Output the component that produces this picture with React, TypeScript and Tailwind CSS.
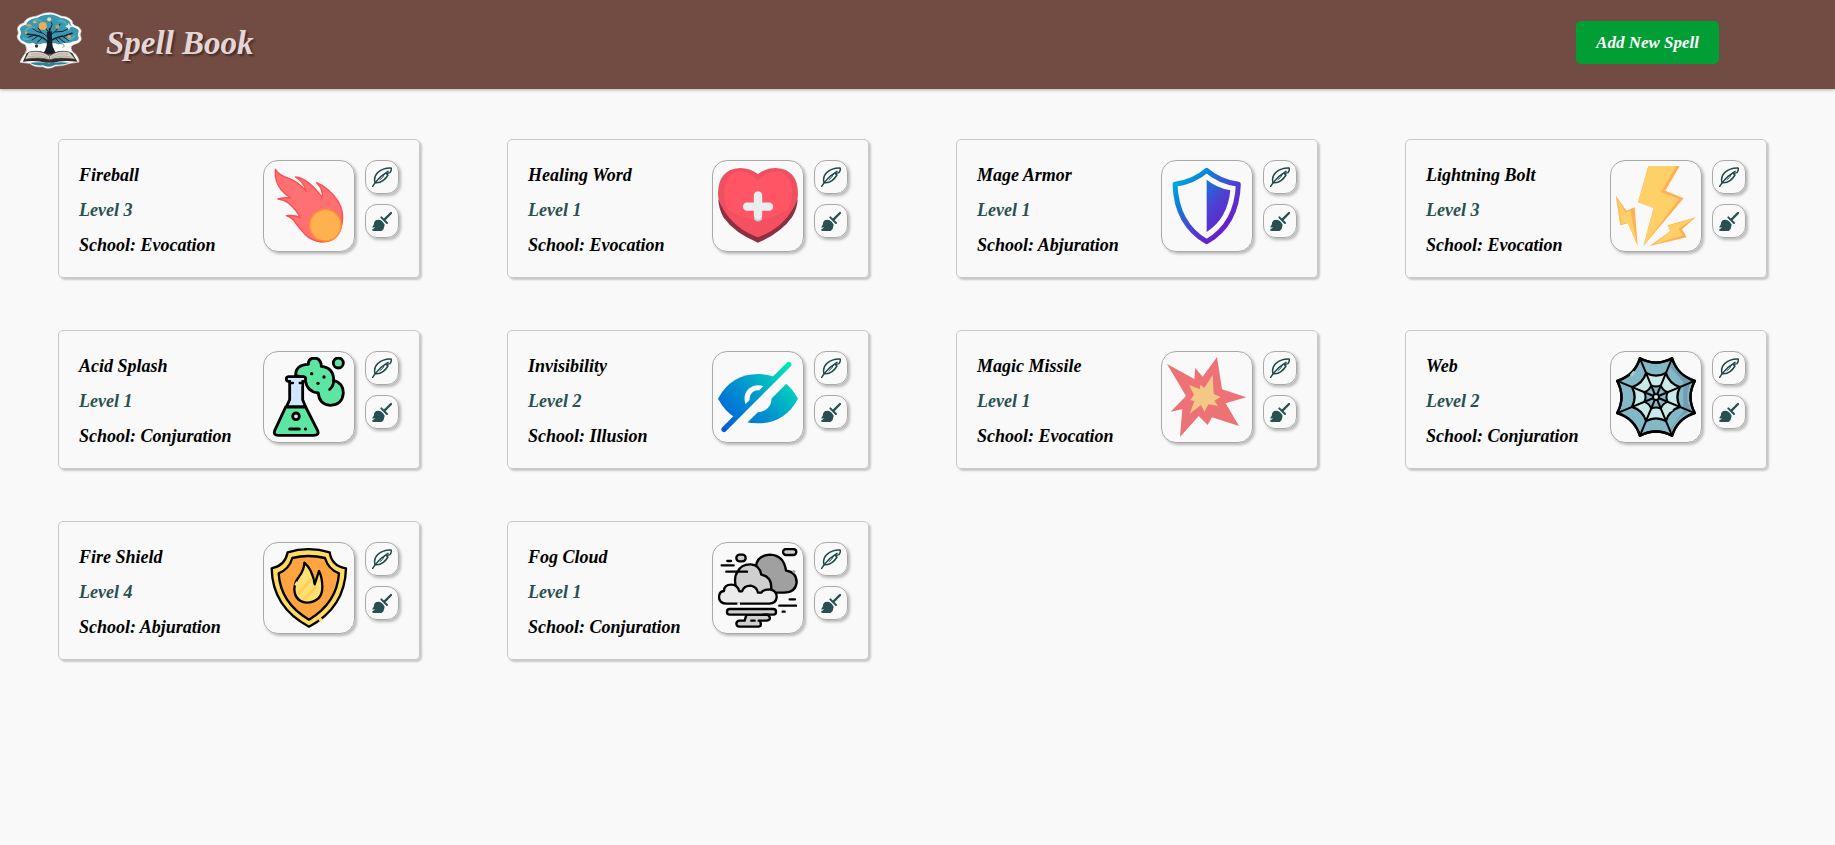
import type { ReactNode } from "react";

function Logo() {
  return (
    <svg viewBox="50 34 200 174" className="h-[58px] w-[67px]" role="img" aria-label="Spell Book logo">
      <path
        d="M148 36C160 35 176 42 186 47Q206 47 218 61Q216 69 226 75Q243 79 245 92Q239 102 245 112Q246 125 229 129Q218 132 215 138Q212 150 228 160Q240 178 238 184L212 188Q190 197 168 196Q148 208 130 198Q106 201 90 188L62 185Q64 176 76 160Q86 148 78 132Q56 124 53 108Q60 98 54 86Q54 72 73 67Q79 53 98 49Q112 47 122 42Q134 36 148 36Z"
        fill="#fff"
        stroke="#e4e2df"
        strokeWidth="2"
      />
      <path
        d="M148 42C160 40 176 47 184 52Q204 52 213 66Q212 74 222 80Q237 84 238 92Q232 102 238 112Q236 122 222 122Q208 130 194 126Q178 134 168 128H130Q112 134 100 126Q82 132 72 122Q60 116 61 108Q68 98 61 86Q62 76 80 72Q84 58 100 54Q116 52 124 46Q136 42 148 42Z"
        fill="#3a98b0"
      />
      <path d="M76 92q14-18 30-10M176 60q20-2 26 14M100 62q16-10 26 0M198 116q20 2 28-12M70 112q10 6 20 2" fill="none" stroke="#5fb3c4" strokeWidth="4" />
      <g fill="none" stroke="#15202c" strokeLinecap="round">
        <path d="M150 140V84M148 128Q132 106 106 104L82 100M150 122Q172 108 194 106L218 98" strokeWidth="4.5" />
        <path d="M148 112Q132 94 112 92L100 84M150 106L170 90L182 70M150 98L138 82M150 92L158 72L156 66M118 104L98 118M188 106L208 120M166 94L190 92L206 84M126 96L116 82M108 102L86 110M176 110L196 126M128 112L114 124M168 112L178 124" strokeWidth="3" />
      </g>
      <path d="M142 94L157 92Q157 126 160 138Q165 152 174 162H126Q138 152 141 138Q145 118 142 94Z" fill="#15202c" />
      <circle cx="130" cy="76" r="12" fill="#f4ab55" />
      <ellipse cx="88" cy="74" rx="9" ry="3.5" fill="#e0a85f" />
      <ellipse cx="106" cy="65" rx="6" ry="3" fill="#e8b46c" />
      <circle cx="174" cy="78" r="6" fill="#c39a63" />
      <circle cx="209" cy="108" r="6" fill="#c9a165" />
      <circle cx="149" cy="56" r="6" fill="#e3dcb4" />
      <path d="M208 66l3 8 9 3-9 4-3 8-4-8-8-4 8-3z" fill="#d4eef0" />
      <circle cx="80" cy="96" r="4" fill="#d9a35e" />
      <circle cx="111" cy="136" r="5" fill="#2b3440" />
      <path d="M186 130q10 0 8 8l-6 2" fill="none" stroke="#8d9299" strokeWidth="2.5" />
      <path d="M92 186Q120 182 148 188Q176 182 210 186Q190 194 168 192Q148 203 130 194Q106 196 92 186Z" fill="#2f8096" />
      <path d="M70 183L82 157Q124 142 150 166Q176 142 218 157L234 183Q190 178 160 186H140Q110 178 70 183Z" fill="#2c2a2c" />
      <path d="M76 176L88 154Q124 146 150 166Q176 146 210 154L228 176Q180 168 150 177Q120 168 76 176Z" fill="#d6cfc2" stroke="#4c4541" strokeWidth="2" />
      <path d="M94 161Q124 155 146 171M154 171Q178 155 206 161M88 169Q120 161 144 174M156 174Q184 161 214 169" fill="none" stroke="#a79f92" strokeWidth="2" />
      <path d="M150 164V180" stroke="#6e655d" strokeWidth="2" />
    </svg>
  );
}

function FireballArt() {
  return (
    <svg viewBox="658 109 240 240" className="size-20">
      <path
        d="M677 119Q690 139 718 146Q748 158 770 185Q762 156 737 142Q776 146 817 203Q822 180 801 159Q838 174 866 216Q884 248 877 282Q868 338 815 337Q786 334 764 312Q750 296 738 280Q728 264 710 258Q736 256 752 264Q740 240 716 220Q704 210 685 208Q704 202 724 205Q692 186 681 156Q675 138 677 119Z"
        fill="#ff7072"
        stroke="#ff4d50"
        strokeWidth="4"
        strokeLinejoin="round"
      />
      <circle cx="827" cy="287" r="47" fill="#ffb04f" stroke="#ff9527" strokeWidth="4" />
    </svg>
  );
}

function HeartArt() {
  return (
    <svg viewBox="54 48 240 240" className="size-20">
      <path d="M55 148L174 240L293 148Q292 176 276 202Q242 250 174 278Q104 250 70 202Q56 176 55 148Z" fill="#8c2f42" />
      <path d="M174 72Q150 54 120 54Q54 58 54 132Q54 154 70 178Q104 236 174 262Q244 236 278 178Q294 154 294 132Q294 58 228 54Q198 54 174 72Z" fill="#ed5060" />
      <path d="M174 92Q150 64 116 64Q72 74 72 130Q72 158 86 182Q130 208 174 208Q218 208 264 180Q276 158 276 130Q276 74 232 64Q198 64 174 92Z" fill="#ff5564" />
      <path d="M70 176Q116 208 174 208Q232 208 278 176Q244 236 174 261Q104 236 70 176Z" fill="#f5505f" />
      <path d="M161 205V208Q174 222 187 208V205Z" fill="#c3cccb" />
      <path d="M174 136V197M141 170H207" stroke="#e8efee" strokeWidth="25" strokeLinecap="round" />
    </svg>
  );
}

function ShieldArt() {
  return (
    <svg viewBox="52 48 240 240" className="size-20">
      <defs>
        <linearGradient id="shield-tint" x1="80" y1="90" x2="240" y2="240" gradientUnits="userSpaceOnUse">
          <stop offset="0" stopColor="#00abe0" />
          <stop offset="0.22" stopColor="#0785dc" />
          <stop offset="0.6" stopColor="#4c42d2" />
          <stop offset="1" stopColor="#6b18cc" />
        </linearGradient>
      </defs>
      <path
        d="M171 61Q134 94 76 103Q80 222 171 275Q262 222 266 103Q208 94 171 61Z"
        fill="none"
        stroke="url(#shield-tint)"
        strokeWidth="15"
        strokeLinejoin="round"
      />
      <path d="M171 89Q198 112 242 121Q234 206 171 246Z" fill="url(#shield-tint)" />
    </svg>
  );
}

function BoltArt() {
  return (
    <svg viewBox="49 48 240 240" className="size-20">
      <path d="M146 48H240L197 122L252 145L131 288L162 174L115 157Z" fill="#ffb052" />
      <path d="M146 48H230L184 126L238 147L131 288L162 174L115 157Z" fill="#ffcf68" />
      <path d="M49 138L80 182L105 172L114 288L85 220L62 226Z" fill="#ffb052" />
      <path d="M54 148L78 188L92 180L112 280L84 218L64 222Z" fill="#ffcf68" />
      <path d="M49 138L62 226L66 212L56 158Z" fill="#ffc05c" />
      <path d="M288 202L247 238L261 262L150 288L212 243L204 226Z" fill="#ffb052" />
      <path d="M284 205L236 236L250 256L160 284L212 243L206 227Z" fill="#ffcf68" />
    </svg>
  );
}

function FlaskArt() {
  return (
    <svg viewBox="58 52 240 240" className="size-20">
      <g stroke="#000" strokeWidth="8.5" strokeLinecap="round" strokeLinejoin="round">
        <circle cx="266" cy="70" r="15" fill="#5ce6a1" />
        <path
          d="M138 108Q136 76 176 74Q176 55 195 55Q214 56 215 80Q252 84 252 122Q281 130 281 160Q278 196 242 197Q208 194 206 160Q172 156 167 122L160 112Z"
          fill="#5ce6a1"
        />
        <path d="M252 122Q252 140 240 149" fill="none" />
        <path d="M120 126V180L110 202H168L159 180V126Z" fill="#cfe8ff" />
        <path d="M108 202L75 273Q70 287 86 287H192Q210 287 204 273L168 202Z" fill="#5ce6a1" />
        <path d="M116 111H162Q168 112 168 118Q168 124 162 125H158M120 125H116Q110 124 110 118Q110 112 116 111" fill="#cfe8ff" />
        <circle cx="139" cy="230" r="10" fill="#cfe8ff" />
        <path d="M120 268H149M167 268H168" strokeWidth="9" />
      </g>
      <path d="M116 115.5H162V121H155V140H124V121H116Z" fill="#cfe8ff" />
      <path d="M122 130H130M150 130H158" stroke="#000" strokeWidth="7" strokeLinecap="round" />
      <g>
        <circle cx="186" cy="102" r="5" />
        <circle cx="223" cy="112" r="5" />
        <circle cx="205" cy="131" r="5" />
      </g>
    </svg>
  );
}

function HiddenEyeArt() {
  return (
    <svg viewBox="54 51 240 240" className="size-20">
      <defs>
        <linearGradient id="eye-tint" x1="70" y1="270" x2="272" y2="72" gradientUnits="userSpaceOnUse">
          <stop offset="0" stopColor="#005bdd" />
          <stop offset="0.5" stopColor="#0299cd" />
          <stop offset="1" stopColor="#00ebb8" />
        </linearGradient>
        <mask id="eye-cut" maskUnits="userSpaceOnUse" x="54" y="51" width="240" height="240">
          <rect x="54" y="51" width="240" height="240" fill="#fff" />
          <path d="M110 256L268 98" stroke="#000" strokeWidth="34" />
          <circle cx="174" cy="176" r="33" fill="none" stroke="#000" strokeWidth="15" />
        </mask>
      </defs>
      <path
        d="M54 176Q94 102 174 102Q254 102 294 176Q254 250 174 250Q94 250 54 176Z"
        fill="url(#eye-tint)"
        mask="url(#eye-cut)"
      />
      <path d="M162 166Q170 158 186 158L164 180Z" fill="url(#eye-tint)" />
      <path d="M72 268L266 74" stroke="url(#eye-tint)" strokeWidth="16" strokeLinecap="round" />
    </svg>
  );
}

function BurstArt() {
  return (
    <svg viewBox="51 51 240 240" className="size-20">
      <path d="M51 72L133 117L136 84L158 110L201 51L216 148L289 172L227 190L267 258L186 232L173 255L146 228L90 291L97 208L62 215L108 168Z" fill="#ec7276" />
      <path d="M117 135L150 148L151 134L163 144L188 105L191 162L212 171L193 182L205 198L175 193L163 215L153 195L119 221L133 184L121 180L132 164Z" fill="#f3c886" />
    </svg>
  );
}

const WEB_CENTER = { x: 168, y: 171 };
const WEB_ANGLES = [22.5, 67.5, 112.5, 157.5, 202.5, 247.5, 292.5, 337.5];

function webPoint(radius: number, degrees: number) {
  const angle = (degrees * Math.PI) / 180;
  return `${(WEB_CENTER.x + radius * Math.cos(angle)).toFixed(1)} ${(WEB_CENTER.y + radius * Math.sin(angle)).toFixed(1)}`;
}

function webRing(radius: number) {
  const arcs = WEB_ANGLES.map((a) => `Q${webPoint(radius * 0.72, a + 22.5)} ${webPoint(radius, a + 45)}`);
  return `M${webPoint(radius, WEB_ANGLES[0])}${arcs.join("")}Z`;
}

function WebArt() {
  return (
    <svg viewBox="48 51 240 240" className="size-20">
      <g stroke="#000" strokeWidth="7" strokeLinejoin="round" strokeLinecap="round">
        <path d={webRing(126)} fill="#83b8c6" />
        <path d="M216 66Q232 98 274 124Q250 170 274 214Q234 224 214 274L198 250L246 204V138L206 94Z" fill="#6f9db4" stroke="none" />
        <path d="M210 80L250 126V214L212 266L198 240L236 200V142L198 102Z" fill="#83b8c6" stroke="none" />
        <path d={webRing(78)} fill="#c9e8ea" strokeWidth="7" />
        <path d={webRing(38)} fill="#83b8c6" strokeWidth="6" />
        <path d={webRing(126)} fill="none" />
        {WEB_ANGLES.map((a) => (
          <path key={a} d={`M${webPoint(8, a)}L${webPoint(124, a)}`} strokeWidth="6" />
        ))}
        <circle cx="168" cy="171" r="9" fill="#c9e8ea" strokeWidth="6" />
      </g>
      <path d="M90 104L100 92L107 98L96 110Z" fill="#a6ccd5" />
      <path d="M206 206L214 202L219 211L211 216Z" fill="#c9e8ea" />
    </svg>
  );
}

function FireShieldArt() {
  return (
    <svg viewBox="58 54 240 240" className="size-20">
      <g stroke="#000" strokeWidth="7" strokeLinejoin="round" strokeLinecap="round">
        <path d="M114 67Q176 48 240 67Q246 108 289 115Q286 234 178 290Q68 232 66 115Q106 108 114 67Z" fill="#ffdc61" />
        <path d="M128 84Q176 72 226 84Q236 118 268 130Q262 218 178 269Q92 218 87 130Q118 118 128 84Z" fill="#ffa440" />
        <path d="M136 164Q134 174 134 178Q136 216 174 218Q218 214 218 172Q218 142 208 123L195 163Q188 118 164 98Q164 118 148 140Q140 150 137 160Z" fill="#ffe173" />
      </g>
      <path d="M140 188L184 143L190 150L146 198ZM156 208L196 168L204 170L168 212Z" fill="#ffd15a" />
      <path d="M134 164L140 154L146 158L139 168Z" fill="#ffe173" />
      <path d="M206 268L212 260L220 270L212 277Z" fill="#ffdc61" />
    </svg>
  );
}

function FogArt() {
  return (
    <svg viewBox="54 54 240 240" className="size-20">
      <g stroke="#000" strokeWidth="7" strokeLinejoin="round" strokeLinecap="round">
        <path d="M168 108Q172 76 210 74Q252 76 258 122Q290 126 290 158Q286 188 252 188H206Z" fill="#a0a0a0" />
        <path d="M108 172Q100 140 114 124Q124 102 152 103Q178 104 184 134Q214 140 214 172Q214 196 190 200H116Z" fill="#cfcfcf" />
        <path d="M80 221Q57 220 57 201Q58 184 72 183Q72 164 94 164Q112 164 118 184H126Q132 167 152 167Q170 170 174 188H184Q190 178 208 178Q230 180 230 202Q228 220 208 221Z" fill="#ebebeb" />
        <path d="M140 254Q136 262 134 272H118Q109 274 109 281Q110 290 118 290H176Q184 288 182 280Q182 272 176 272H200Q210 270 210 264Q208 256 200 254Z" fill="#cfcfcf" />
        <rect x="81" y="237" width="147" height="17" rx="8" fill="#cfcfcf" />
        <rect x="249" y="57" width="40" height="18" rx="9" fill="#cfcfcf" />
        <rect x="109" y="74" width="28" height="20" rx="10" fill="#cfcfcf" />
        <path d="M82 93H93M65 106H101M79 125H141M269 208H285M238 227H288M248 245H254M154 272H164M190 254H204" />
      </g>
      <path d="M112 217H120V226H112Z" fill="#ebebeb" />
      <path d="M278 120L287 122L284 132L277 127Z" fill="#a0a0a0" />
    </svg>
  );
}

function QuillIcon() {
  return (
    <svg viewBox="0 0 60 60" className="size-5" fill="none" stroke="#1f4848" strokeWidth="4.4" strokeLinecap="round" strokeLinejoin="round">
      <path d="M2 58L10 46Q26 26 48 13" />
      <path d="M9 46Q4 30 18 16Q34 2 57 3Q60 8 54 17L43 20L48 24Q42 34 34 40Q22 49 9 47" />
      <path d="M24 38Q34 32 38 20" strokeWidth="3" />
    </svg>
  );
}

function BroomIcon() {
  return (
    <svg viewBox="0 0 60 60" className="size-5" fill="#285050">
      <path d="M57 6L38 25" stroke="#285050" strokeWidth="7" strokeLinecap="round" />
      <path d="M28 19L45 36" stroke="#285050" strokeWidth="6" strokeLinecap="round" />
      <path d="M21 26Q31 28 38 41Q37 54 29 60H5Q-1 60 1 55Q6 53 9 48L2 50Q0 46 5 42Q5 31 12 27Z" />
    </svg>
  );
}

type Spell = { name: string; level: number; school: string; art: ReactNode };

const spells: Spell[] = [
  { name: "Fireball", level: 3, school: "Evocation", art: <FireballArt /> },
  { name: "Healing Word", level: 1, school: "Evocation", art: <HeartArt /> },
  { name: "Mage Armor", level: 1, school: "Abjuration", art: <ShieldArt /> },
  { name: "Lightning Bolt", level: 3, school: "Evocation", art: <BoltArt /> },
  { name: "Acid Splash", level: 1, school: "Conjuration", art: <FlaskArt /> },
  { name: "Invisibility", level: 2, school: "Illusion", art: <HiddenEyeArt /> },
  { name: "Magic Missile", level: 1, school: "Evocation", art: <BurstArt /> },
  { name: "Web", level: 2, school: "Conjuration", art: <WebArt /> },
  { name: "Fire Shield", level: 4, school: "Abjuration", art: <FireShieldArt /> },
  { name: "Fog Cloud", level: 1, school: "Conjuration", art: <FogArt /> },
];

function SmallButton({ label, children }: { label: string; children: ReactNode }) {
  return (
    <button
      type="button"
      aria-label={label}
      className="flex size-[34px] items-center justify-center rounded-xl border border-[#a9a9a9] shadow-[2px_2px_3px_#b8b8b8]"
    >
      {children}
    </button>
  );
}

function SpellCard({ name, level, school, art }: Spell) {
  return (
    <article className="flex items-start gap-2.5 rounded-[5px] border border-[#c8c8c8] px-5 pt-5 pb-[18px] shadow-[2px_2px_2px_#c8c8c8]">
      <div className="flex min-w-0 flex-1 flex-col gap-2 pt-0.5 text-lg/[27px] font-bold whitespace-nowrap text-black italic">
        <h2>{name}</h2>
        <p className="text-[#285050]">Level {level}</p>
        <p>School: {school}</p>
      </div>
      <div className="flex size-[92px] shrink-0 items-center justify-center rounded-[15px] border border-[#a9a9a9] shadow-[2px_2px_3px_#b8b8b8]">
        {art}
      </div>
      <div className="flex shrink-0 flex-col gap-2.5">
        <SmallButton label={`Edit ${name}`}>
          <QuillIcon />
        </SmallButton>
        <SmallButton label={`Delete ${name}`}>
          <BroomIcon />
        </SmallButton>
      </div>
    </article>
  );
}

export default function App() {
  return (
    <div className="min-h-screen bg-[#f9f9f9] font-['Liberation_Serif',serif]">
      <header className="flex h-[89px] items-center justify-between bg-[#724c42] pr-[116px] pb-1 pl-4 shadow-[0_1px_3px_rgba(0,0,0,0.3)]">
        <div className="flex items-center gap-[23px] pb-1">
          <Logo />
          <h1 className="pt-1 text-[33px]/[44px] font-bold text-[#e5d6d6] italic [text-shadow:2px_2px_2px_rgba(0,0,0,0.4)]">Spell Book</h1>
        </div>
        <button type="button" className="rounded-[5px] bg-[#009e35] px-5 py-2.5 text-[17px]/[23px] font-bold text-white italic">
          Add New Spell
        </button>
      </header>
      <main className="grid grid-cols-4 gap-x-[87px] gap-y-[52px] pt-[50px] pr-[68px] pb-10 pl-[58px]">
        {spells.map((spell) => (
          <SpellCard key={spell.name} {...spell} />
        ))}
      </main>
    </div>
  );
}
